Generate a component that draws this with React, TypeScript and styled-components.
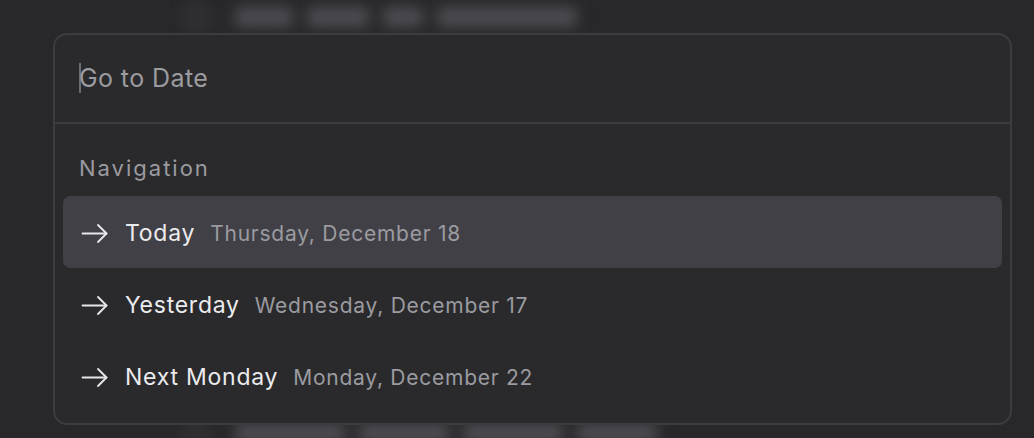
import React from 'react'
import styled, { createGlobalStyle } from 'styled-components'

const GlobalStyle = createGlobalStyle`
  html, body {
    margin: 0;
    padding: 0;
    background: #28282a;
    overflow: hidden;
  }
  * {
    box-sizing: border-box;
  }
`

const Page = styled.div`
  position: relative;
  width: 1034px;
  height: 438px;
  padding: 33px 22px 0 53px;
  font-family: Inter, 'Noto Sans', sans-serif;
`

const Backdrop = styled.div`
  position: absolute;
  inset: 0;
  filter: blur(7px);
  pointer-events: none;
`

const GhostRow = styled.div<{ top: number }>`
  position: absolute;
  left: 185px;
  top: ${({ top }) => top}px;
  display: flex;
  align-items: center;
  gap: 14px;
`

const GhostBox = styled.div`
  width: 22px;
  height: 22px;
  border: 3px solid #46464b;
  border-radius: 5px;
  margin-right: 14px;
`

const GhostText = styled.div<{ w: number }>`
  width: ${({ w }) => w}px;
  height: 20px;
  border-radius: 4px;
  background: #4c4c52;
`

const Dialog = styled.div`
  position: relative;
  width: 959px;
  height: 392px;
  background: #2a2a2c;
  border: 2px solid #3c3c40;
  border-radius: 14px;
  display: flex;
  flex-direction: column;
  overflow: hidden;
`

const SearchBar = styled.div`
  height: 89px;
  display: flex;
  align-items: center;
  padding: 0 24px 2px;
  border-bottom: 2px solid #3c3c40;
`

const Caret = styled.span`
  width: 2px;
  height: 30px;
  background: #6d6d72;
  margin-right: -2px;
`

const Input = styled.input`
  flex: 1;
  background: transparent;
  border: none;
  outline: none;
  padding: 0;
  font-family: inherit;
  font-size: 25px;
  letter-spacing: 0.4px;
  color: #e6e6e8;
  &::placeholder {
    color: #9b9ba0;
  }
`

const Group = styled.div`
  padding: 20px 8px 0;
  display: flex;
  flex-direction: column;
`

const GroupLabel = styled.div`
  height: 52px;
  padding: 11px 16px 0;
  font-size: 22px;
  letter-spacing: 2px;
  color: #9b9ba0;
`

const Item = styled.div<{ active?: boolean }>`
  height: 72px;
  display: flex;
  align-items: center;
  padding: 2px 18px 0;
  border-radius: 7px;
  background: ${({ active }) => (active ? '#414047' : 'transparent')};
`

const Arrow = styled.svg`
  width: 27px;
  height: 27px;
  margin-right: 17px;
  flex-shrink: 0;
`

const Label = styled.span`
  font-size: 23px;
  color: #ececee;
  margin-right: 15px;
  letter-spacing: 0.75px;
`

const Hint = styled.span`
  font-size: 21px;
  color: #9b9ba0;
  letter-spacing: 0.75px;
`

const items = [
  { label: 'Today', hint: 'Thursday, December 18', active: true },
  { label: 'Yesterday', hint: 'Wednesday, December 17' },
  { label: 'Next Monday', hint: 'Monday, December 22' }
]

const ArrowIcon = () => (
  <Arrow viewBox="0 0 27 27" fill="none" stroke="#e8e8ea" strokeWidth="1.8" strokeLinecap="round" strokeLinejoin="round">
    <path d="M1.5 13.5h24" />
    <path d="M17 5l8.5 8.5L17 22" />
  </Arrow>
)

export default function App() {
  return (
    <>
      <GlobalStyle />
      <Page>
        <Backdrop>
          <GhostRow top={6}>
            <GhostBox />
            <GhostText w={58} />
            <GhostText w={62} />
            <GhostText w={40} />
            <GhostText w={140} />
          </GhostRow>
          <GhostRow top={422}>
            <GhostBox />
            <GhostText w={110} />
            <GhostText w={90} />
            <GhostText w={100} />
            <GhostText w={80} />
          </GhostRow>
        </Backdrop>
        <Dialog>
          <SearchBar>
            <Caret />
            <Input placeholder="Go to Date" />
          </SearchBar>
          <Group>
            <GroupLabel>Navigation</GroupLabel>
            {items.map((it) => (
              <Item key={it.label} active={it.active}>
                <ArrowIcon />
                <Label>{it.label}</Label>
                <Hint>{it.hint}</Hint>
              </Item>
            ))}
          </Group>
        </Dialog>
      </Page>
    </>
  )
}
